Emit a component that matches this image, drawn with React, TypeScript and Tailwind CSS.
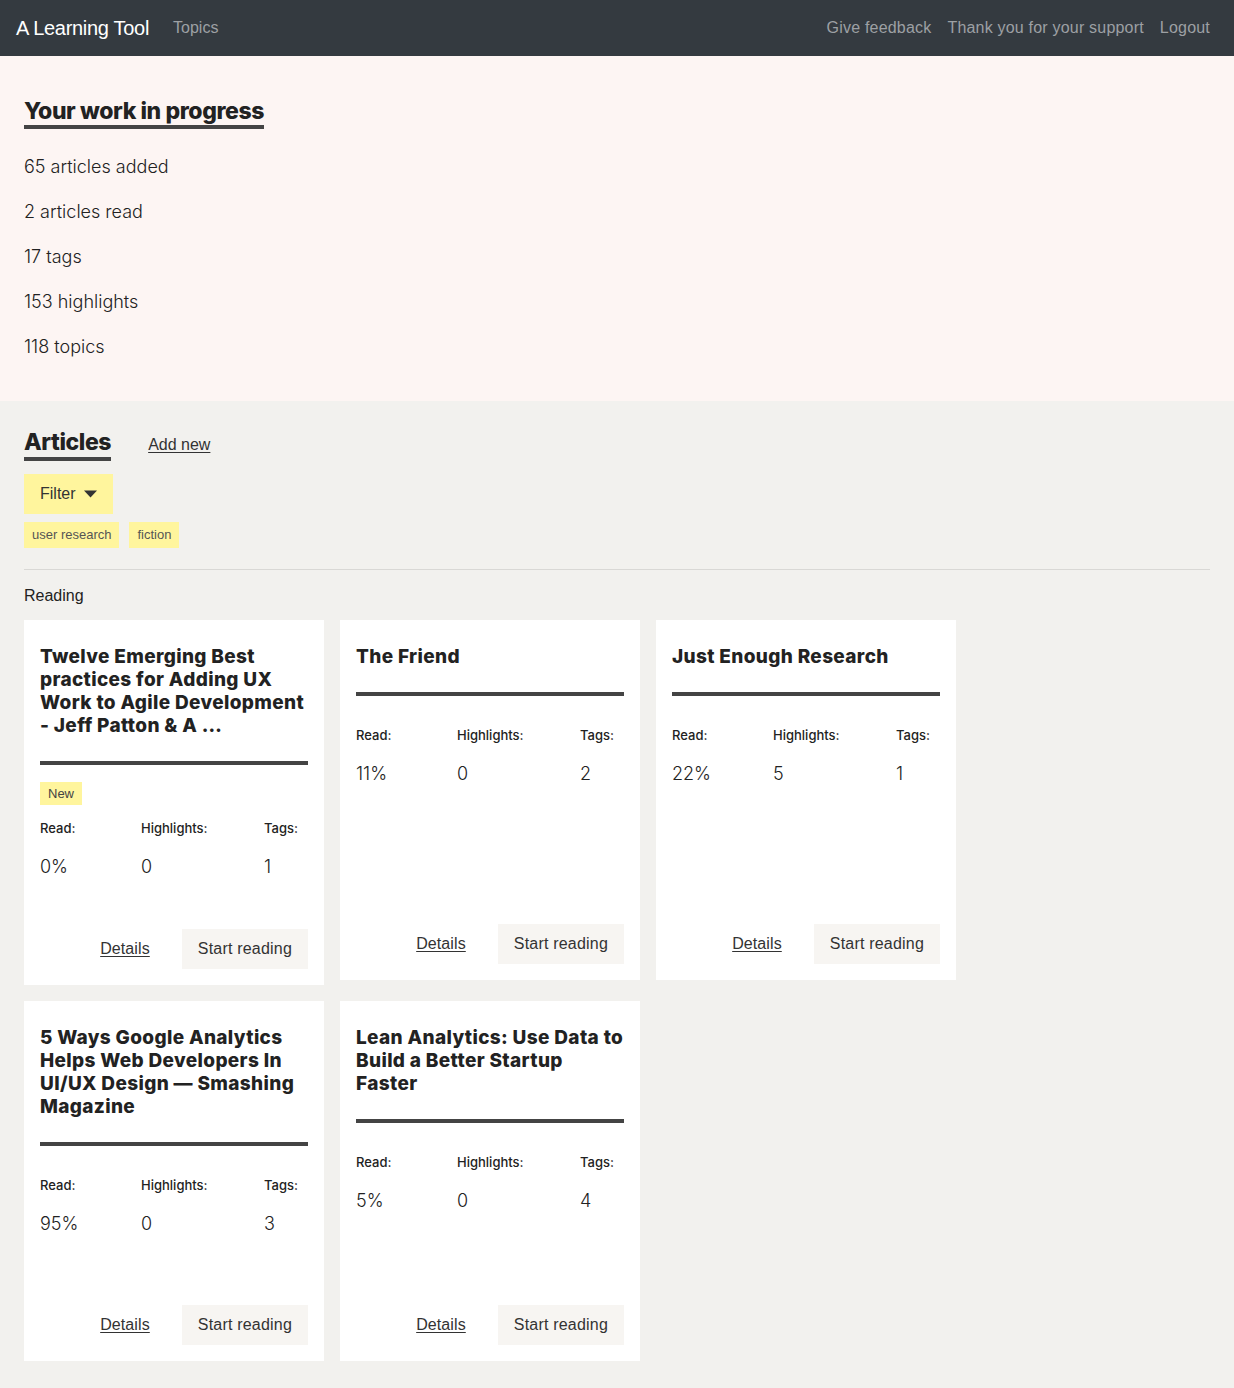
import React from "react";

type Card = {
  title: string;
  isNew?: boolean;
  read: string;
  highlights: string;
  tags: string;
};

const row1: Card[] = [
  {
    title:
      "Twelve Emerging Best practices for Adding UX Work to Agile Development - Jeff Patton & A …",
    isNew: true,
    read: "0%",
    highlights: "0",
    tags: "1",
  },
  { title: "The Friend", read: "11%", highlights: "0", tags: "2" },
  { title: "Just Enough Research", read: "22%", highlights: "5", tags: "1" },
];

const row2: Card[] = [
  {
    title:
      "5 Ways Google Analytics Helps Web Developers In UI/UX Design — Smashing Magazine",
    read: "95%",
    highlights: "0",
    tags: "3",
  },
  {
    title: "Lean Analytics: Use Data to Build a Better Startup Faster",
    read: "5%",
    highlights: "0",
    tags: "4",
  },
];

const inter = "font-['Inter',sans-serif]";

function ArticleCard({ c }: { c: Card }) {
  return (
    <div className="w-[300px] bg-white pt-[24px] pb-4 px-4 flex flex-col">
      <div className="min-h-[229px]">
        <h3
          className={`${inter} pt-px text-[19px] leading-[23px] font-extrabold text-[#222] tracking-[0.35px]`}
        >
          {c.title}
        </h3>
        <div className="mt-[24px] h-[4px] bg-[#444]" />
        {c.isNew ? (
          <div className="mt-[16px]">
            <span className="inline-block bg-[#fff59d] px-2 h-[23px] leading-[23px] text-[13px] text-[#444]">
              New
            </span>
          </div>
        ) : null}
        <div
          className={`${c.isNew ? "mt-[15px]" : "mt-[31px]"} grid grid-cols-[101px_123px_1fr] ${inter}`}
        >
          <div className="text-[13px] leading-4 font-medium text-[#222]">Read:</div>
          <div className="text-[13px] leading-4 font-medium text-[#222]">Highlights:</div>
          <div className="text-[13px] leading-4 font-medium text-[#222]">Tags:</div>
          <div className="mt-[20px] text-[18px] leading-[22px] font-light text-[#222]">
            {c.read}
          </div>
          <div className="mt-[20px] text-[18px] leading-[22px] font-light text-[#222]">
            {c.highlights}
          </div>
          <div className="mt-[20px] text-[18px] leading-[22px] font-light text-[#222]">
            {c.tags}
          </div>
        </div>
      </div>
      <div className="mt-[51px] flex items-center justify-end gap-8">
        <a className="text-[16px] text-[#333] underline underline-offset-2 tracking-[0.1px]">
          Details
        </a>
        <button className="h-10 px-4 bg-[#f7f5f2] text-[16px] text-[#333] tracking-[0.2px]">
          Start reading
        </button>
      </div>
    </div>
  );
}

export default function App() {
  return (
    <div className="min-h-[1388px] bg-[#f2f1ee] font-['Liberation_Sans',Arial,sans-serif] text-[#222]">
      <nav className="h-14 bg-[#343a40] flex items-center justify-between px-4">
        <div className="flex items-center">
          <span className="text-[20px] text-white tracking-[-0.3px]">A Learning Tool</span>
          <span className="ml-6 text-[16px] text-[#9da0a4]">Topics</span>
        </div>
        <div className="flex items-center text-[16px] text-[#9da0a4] tracking-[0.2px]">
          <span className="px-2">Give feedback</span>
          <span className="px-2">Thank you for your support</span>
          <span className="pl-2 pr-2">Logout</span>
        </div>
      </nav>

      <section className="bg-[#fdf5f3] px-6 pt-[41px] pb-6">
        <h1
          className={`${inter} inline-block text-[23px] leading-[28px] font-extrabold text-[#222] border-b-4 border-[#444] tracking-[-0.4px]`}
        >
          Your work in progress
        </h1>
        <div className={`${inter} mt-[24px] text-[18px] leading-[27px] font-light text-[#222]`}>
          <p className="mb-[18px]">65 articles added</p>
          <p className="mb-[18px]">2 articles read</p>
          <p className="mb-[18px]">17 tags</p>
          <p className="mb-[18px]">153 highlights</p>
          <p className="mb-[17px]">118 topics</p>
        </div>
      </section>

      <section className="px-6 pt-[27px] pb-[27px]">
        <div className="flex items-end">
          <h2
            className={`${inter} inline-block text-[23px] leading-[29px] font-extrabold text-[#222] border-b-4 border-[#444] tracking-[-0.4px]`}
          >
            Articles
          </h2>
          <a className="ml-[37px] mb-[4px] text-[16px] text-[#333] underline underline-offset-2">
            Add new
          </a>
        </div>
        <button className="mt-[13px] h-10 px-4 bg-[#fff59d] text-[16px] text-[#333] flex items-center gap-2">
          Filter
          <svg width="13" height="8" viewBox="0 0 13 8">
            <path d="M0 0.5 L13 0.5 L6.5 7.5 Z" fill="#333" />
          </svg>
        </button>
        <div className="mt-2 flex gap-[10px]">
          <span className="h-[26px] leading-[26px] px-2 bg-[#fff59d] text-[13px] text-[#555]">
            user research
          </span>
          <span className="h-[26px] leading-[26px] px-2 bg-[#fff59d] text-[13px] text-[#555]">
            fiction
          </span>
        </div>
        <hr className="mt-[21px] border-0 border-t border-[#d9d8d5]" />
        <div className="mt-[14px] text-[16px] leading-6 text-[#222]">Reading</div>
        <div className="mt-[12px] flex flex-col gap-4">
          <div className="flex items-start gap-4">
            {row1.map((c) => (
              <ArticleCard key={c.title} c={c} />
            ))}
          </div>
          <div className="flex items-start gap-4">
            {row2.map((c) => (
              <ArticleCard key={c.title} c={c} />
            ))}
          </div>
        </div>
      </section>
    </div>
  );
}
